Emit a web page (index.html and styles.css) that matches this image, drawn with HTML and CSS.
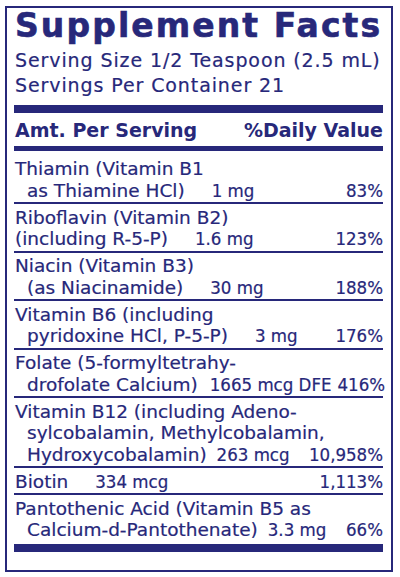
FILE: index.html
```html
<!DOCTYPE html>
<html>
  <head>
    <meta charset='utf-8'>
    <title>Supplement Facts</title>
    <link rel="stylesheet" href="styles.css">
  </head>
  <body>
    <div class='label'>
      <h1>Supplement Facts</h1>
      <div class='serving'>Serving Size 1/2 Teaspoon (2.5 mL)</div>
      <div class='serving'>Servings Per Container 21</div>
      <div class='bar thick'></div>
      <div class='head'>
        <span>Amt. Per Serving</span>
        <span>%Daily Value</span>
      </div>
      <div class='bar mid'></div>

      <div class='row first'>
        <div class='line'>Thiamin (Vitamin B1</div>
        <div class='line in'><span>as Thiamine HCl)</span><span class='amt'>1 mg</span><span class='dv'>83%</span></div>
      </div>
      <div class='row'>
        <div class='line'>Riboflavin (Vitamin B2)</div>
        <div class='line'><span>(including R-5-P)</span><span class='amt'>1.6 mg</span><span class='dv'>123%</span></div>
      </div>
      <div class='row'>
        <div class='line'>Niacin (Vitamin B3)</div>
        <div class='line in'><span>(as Niacinamide)</span><span class='amt'>30 mg</span><span class='dv'>188%</span></div>
      </div>
      <div class='row'>
        <div class='line'>Vitamin B6 (including</div>
        <div class='line in'><span>pyridoxine HCl, P-5-P)</span><span class='amt'>3 mg</span><span class='dv'>176%</span></div>
      </div>
      <div class='row'>
        <div class='line'>Folate (5-formyltetrahy-</div>
        <div class='line in'><span>drofolate Calcium)</span><span class='amt tight'>1665 mcg DFE</span><span class='dv'>416%</span></div>
      </div>
      <div class='row'>
        <div class='line'>Vitamin B12 (including Adeno-</div>
        <div class='line in'>sylcobalamin, Methylcobalamin,</div>
        <div class='line in'><span>Hydroxycobalamin)</span><span class='amt near'>263 mcg</span><span class='dv'>10,958%</span></div>
      </div>
      <div class='row'>
        <div class='line'><span>Biotin</span><span class='amt'>334 mcg</span><span class='dv'>1,113%</span></div>
      </div>
      <div class='row last'>
        <div class='line'>Pantothenic Acid (Vitamin B5 as</div>
        <div class='line in'><span>Calcium-d-Pantothenate)</span><span class='amt near'>3.3 mg</span><span class='dv'>66%</span></div>
      </div>
      <div class='bar foot'></div>
    </div>
  </body>
</html>
```

FILE: styles.css
```css
body {
  margin: 0;
  background: #fff;
  color: #27287a;
  font-family: "DejaVu Sans", sans-serif;
}
.label {
  box-sizing: border-box;
  width: 388px;
  height: 566px;
  margin: 6px 0 0 5px;
  padding: 0 8px 0 7px;
  border: solid 2px #27287a;
}
h1 {
  margin: 0 0 5px 1px;
  font-weight: bold;
  font-size: 33px;
  line-height: 35px;
  letter-spacing: 2.1px;
  white-space: nowrap;
  -webkit-text-stroke: 0.6px #27287a;
}
.serving {
  font-size: 19px;
  line-height: 25px;
  padding-left: 1px;
  letter-spacing: 0.9px;
  white-space: nowrap;
  -webkit-text-stroke: 0.2px #27287a;
}
.bar { background-color: #27287a; }
.thick { height: 8px; margin-top: 7px; }
.mid { height: 5px; }
.foot { height: 8px; margin-top: 2px; }
.head {
  display: flex;
  justify-content: space-between;
  font-weight: bold;
  font-size: 19px;
  line-height: 24px;
  padding: 5px 0 4px 1px;
}
.row {
  font-size: 18.5px;
  line-height: 21.5px;
  padding: 2.5px 0 1px 1px;
  border-bottom: solid 2px #27287a;
  -webkit-text-stroke: 0.2px #27287a;
}
.row.first { padding-top: 7px; }
.row.last { border-bottom: none; }
.line {
  display: flex;
  white-space: nowrap;
}
.line.in { padding-left: 12px; }
.amt, .dv {
  font-family: "DejaVu Sans Condensed", "DejaVu Sans", sans-serif;
  font-stretch: condensed;
}
.amt { margin-left: 27px; }
.amt.tight { margin-left: 12px; }
.amt.near { margin-left: 10px; }
.dv { margin-left: auto; padding-left: 6px; }
```
